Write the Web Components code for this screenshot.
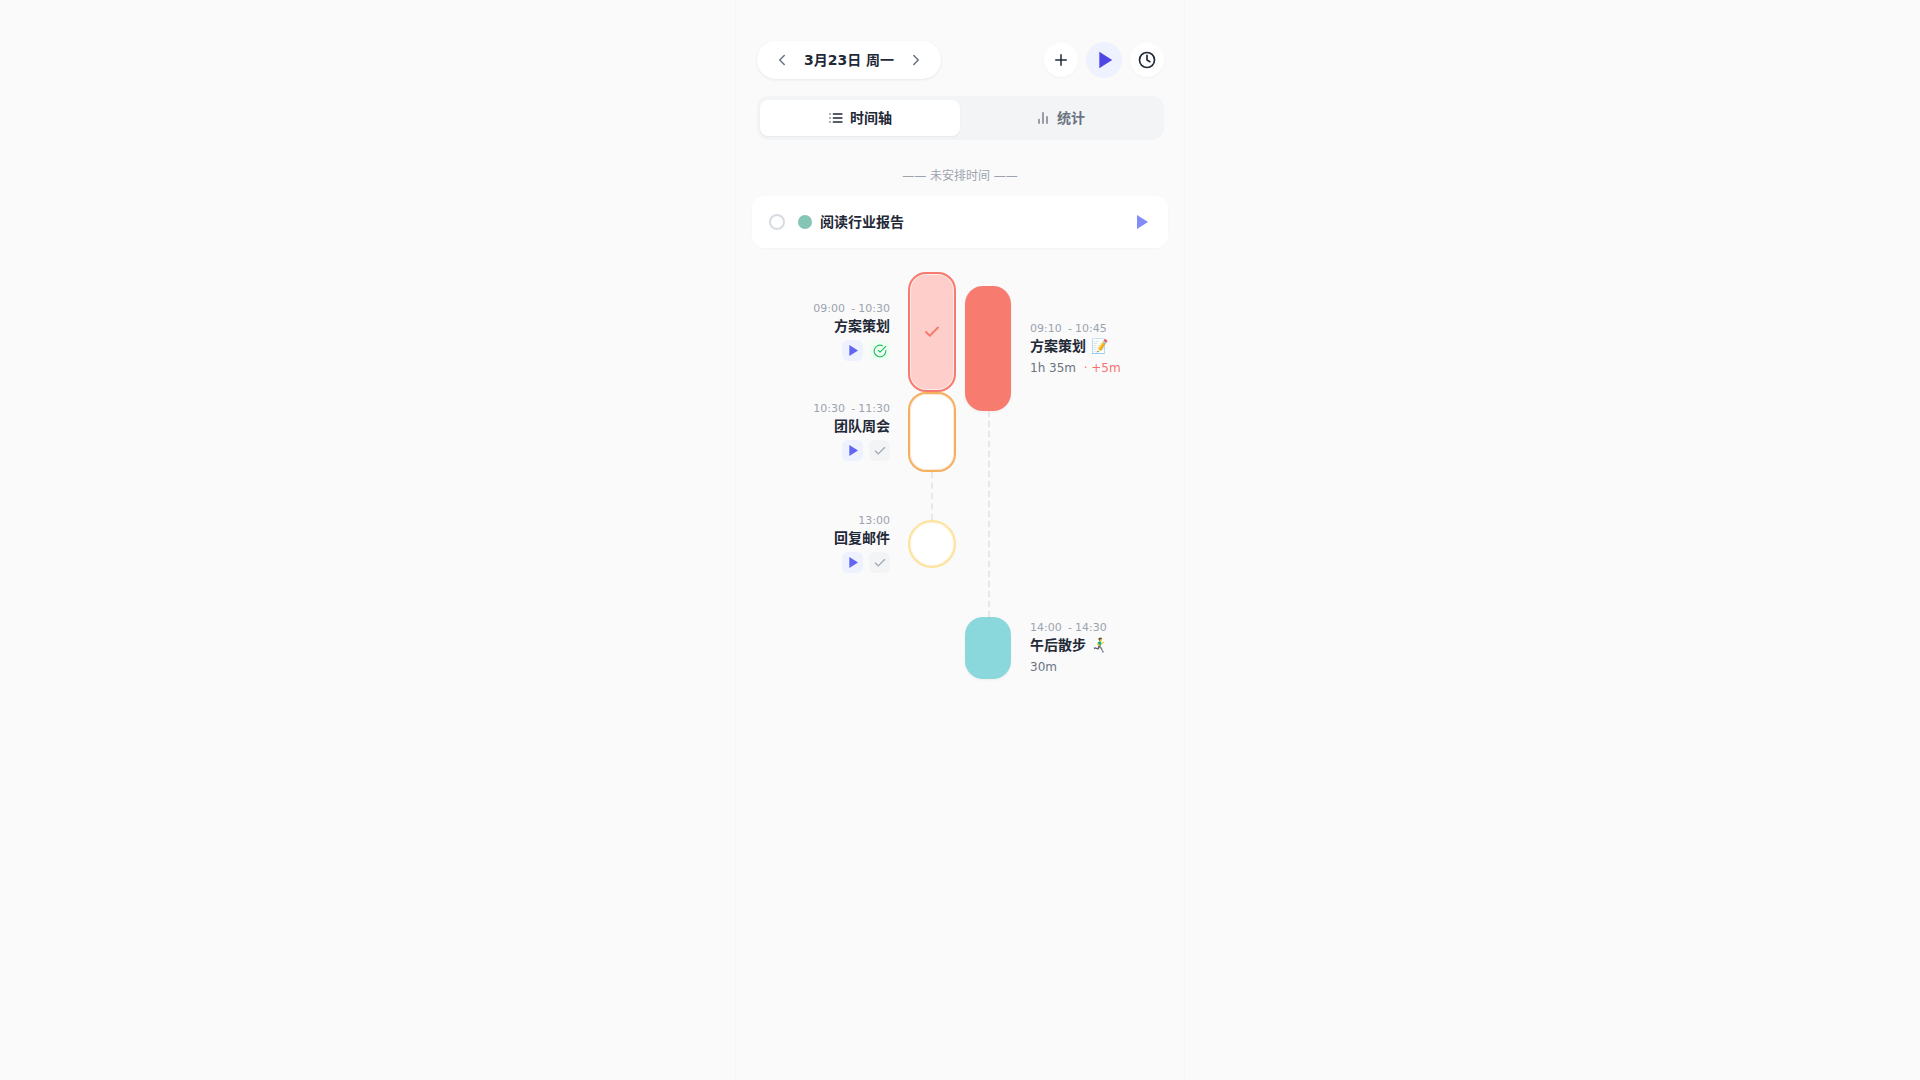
<!DOCTYPE html>
<html lang="zh">
<head>
<meta charset="utf-8">
<title>时间轴</title>
<style>
  html, body { margin: 0; height: 100%; }
  body {
    background: #fafafa;
    font-family: "DejaVu Sans", "Noto Sans CJK SC", sans-serif;
    color: #1f2937;
  }
</style>
</head>
<body>
<day-app>
  <day-header></day-header>
  <day-tabs></day-tabs>
  <section-label>—— 未安排时间 ——</section-label>
  <task-card>阅读行业报告</task-card>
  <day-timeline>
    <plan-block slot="plan" kind="done" height="120" gap="0" time="09:00" end="10:30" state="done">方案策划</plan-block>
    <plan-block slot="plan" kind="orange" height="80" gap="0" time="10:30" end="11:30">团队周会</plan-block>
    <plan-block slot="plan" kind="yellow" height="48" gap="48" time="13:00">回复邮件</plan-block>
    <actual-block slot="actual" color="#f87b6f" height="125" gap="0" time="09:10" end="10:45" emoji="📝" dur="1h 35m" over="+5m">方案策划</actual-block>
    <actual-block slot="actual" color="#8bd8dc" height="62" gap="206" time="14:00" end="14:30" emoji="🏃‍♂️‍➡️" dur="30m">午后散步</actual-block>
  </day-timeline>
</day-app>

<script>
const PLAY = `<svg viewBox="0 0 24 24" width="100%" height="100%"><path d="M8 5v14l11-7z" fill="currentColor"/></svg>`;
const CHECK = `<svg viewBox="0 0 24 24" width="100%" height="100%" fill="none" stroke="currentColor" stroke-width="2" stroke-linecap="round" stroke-linejoin="round"><path d="M20 6L9 17l-5-5"/></svg>`;

class DayApp extends HTMLElement {
  constructor() {
    super();
    this.attachShadow({ mode: 'open' }).innerHTML = `
    <style>
      :host {
        display: block;
        box-sizing: border-box;
        width: 448px;
        min-height: 100vh;
        margin: 0 auto;
        padding: 41px 16px 0;
        background: #fafafa;
        box-shadow: 0 0 0 1px #f6f6f6;
      }
    </style>
    <slot></slot>`;
  }
}

class DayHeader extends HTMLElement {
  constructor() {
    super();
    this.attachShadow({ mode: 'open' }).innerHTML = `
    <style>
      :host { display: flex; align-items: center; justify-content: space-between; margin: 0 4px 0 5px; height: 38px; }
      .pill {
        display: flex; align-items: center; justify-content: space-between;
        box-sizing: border-box; width: 184px; height: 38px; padding: 0 16px;
        background: #fff; border-radius: 19px;
        box-shadow: 0 1px 3px rgba(0,0,0,.08);
        font-size: 14px; font-weight: 700; color: #1f2937;
      }
      .pill span { padding-bottom: 2px; }
      .pill svg { width: 18px; height: 18px; flex: none; color: #6b7280; }
      .actions { display: flex; align-items: center; gap: 8px; }
      .round {
        display: flex; align-items: center; justify-content: center;
        width: 34px; height: 34px; border-radius: 50%; background: #fff;
        box-shadow: 0 1px 2px rgba(0,0,0,.04); color: #1f2937;
      }
      .round svg { width: 20px; height: 20px; }
      .round.plus svg { width: 18px; height: 18px; }
      .round.play { width: 36px; height: 36px; background: #eef2ff; color: #4f46e5; box-shadow: none; }
      .round.play svg { width: 28px; height: 28px; }
    </style>
    <div class="pill">
      <svg viewBox="0 0 24 24" fill="none" stroke="currentColor" stroke-width="2" stroke-linecap="round" stroke-linejoin="round"><path d="M15 18l-6-6 6-6"/></svg>
      <span>3月23日 周一</span>
      <svg viewBox="0 0 24 24" fill="none" stroke="currentColor" stroke-width="2" stroke-linecap="round" stroke-linejoin="round"><path d="M9 18l6-6-6-6"/></svg>
    </div>
    <div class="actions">
      <div class="round plus"><svg viewBox="0 0 24 24" fill="none" stroke="currentColor" stroke-width="2" stroke-linecap="round"><path d="M12 5v14M5 12h14"/></svg></div>
      <div class="round play">${PLAY}</div>
      <div class="round"><svg viewBox="0 0 24 24" fill="none" stroke="currentColor" stroke-width="2" stroke-linecap="round" stroke-linejoin="round"><circle cx="12" cy="12" r="9"/><path d="M12 6.5V12l3.5 2"/></svg></div>
    </div>`;
  }
}

class DayTabs extends HTMLElement {
  constructor() {
    super();
    this.attachShadow({ mode: 'open' }).innerHTML = `
    <style>
      :host {
        display: flex; box-sizing: border-box; height: 44px; margin: 17px 4px 0 5px;
        padding: 4px 4px 4px 3px; background: #f3f4f6; border-radius: 12px;
      }
      .tab {
        flex: 1; display: flex; align-items: center; justify-content: center; gap: 6px;
        font-size: 14px; font-weight: 600; color: #6b7280; border-radius: 8px;
      }
      .tab span { padding-bottom: 2px; }
      .tab.on { background: #fff; color: #1f2937; box-shadow: 0 1px 2px rgba(0,0,0,.05); }
      svg { width: 16px; height: 16px; }
    </style>
    <div class="tab on">
      <svg viewBox="0 0 24 24" fill="none" stroke="currentColor" stroke-width="2" stroke-linecap="round"><path d="M8 6h13M8 12h13M8 18h13M3 6h.01M3 12h.01M3 18h.01"/></svg>
      <span>时间轴</span>
    </div>
    <div class="tab">
      <svg viewBox="0 0 24 24" fill="none" stroke="currentColor" stroke-width="2" stroke-linecap="round"><path d="M18 20V10M12 20V4M6 20v-6"/></svg>
      <span>统计</span>
    </div>`;
  }
}

class SectionLabel extends HTMLElement {
  constructor() {
    super();
    this.attachShadow({ mode: 'open' }).innerHTML = `
    <style>
      :host { display: block; margin-top: 27px; height: 18px; line-height: 18px; text-align: center; font-size: 12px; color: #9ca3af; }
    </style>
    <slot></slot>`;
  }
}

class TaskCard extends HTMLElement {
  constructor() {
    super();
    this.attachShadow({ mode: 'open' }).innerHTML = `
    <style>
      :host {
        display: flex; align-items: center; box-sizing: border-box; height: 52px; margin-top: 11px;
        padding: 0 15px 0 17px; background: #fff; border-radius: 12px;
        box-shadow: 0 1px 2px rgba(0,0,0,.03);
        font-size: 14px; font-weight: 600; color: #1f2937;
      }
      .radio { box-sizing: border-box; width: 16px; height: 16px; border-radius: 50%; border: 2px solid #d9dbe3; }
      .dot { width: 14px; height: 14px; border-radius: 50%; background: #84c5b6; margin: 0 8px 0 13px; }
      .label { flex: 1; padding-bottom: 2px; }
      .play { width: 24px; height: 24px; color: #818cf8; }
    </style>
    <span class="radio"></span><span class="dot"></span>
    <span class="label"><slot></slot></span>
    <span class="play">${PLAY}</span>`;
  }
}

class DayTimeline extends HTMLElement {
  constructor() {
    super();
    this.attachShadow({ mode: 'open' }).innerHTML = `
    <style>
      :host { display: flex; margin-top: 24px; }
      .plan { width: 204px; flex: none; display: flex; flex-direction: column; }
      .actual { margin-left: 9px; padding-top: 14px; display: flex; flex-direction: column; }
    </style>
    <div class="plan"><slot name="plan"></slot></div>
    <div class="actual"><slot name="actual"></slot></div>`;
  }
}

const PLAN_STYLES = {
  done: 'background:#fecfca;border-color:#f87b6f;box-shadow:inset 0 0 0 1px rgba(255,255,255,.6)',
  orange: 'background:#fff;border-color:#f6ae5f;box-shadow:inset 0 0 0 1px rgba(246,174,95,.25)',
  yellow: 'background:#fff;border-color:#fde29b;box-shadow:inset 0 0 0 1px rgba(253,226,155,.4)',
};

class PlanBlock extends HTMLElement {
  constructor() {
    super();
    const h = +this.getAttribute('height');
    const gap = +this.getAttribute('gap');
    const done = this.getAttribute('state') === 'done';
    const end = this.getAttribute('end');
    const radius = h <= 48 ? '50%' : '18px';
    this.attachShadow({ mode: 'open' }).innerHTML = `
    <style>
      :host { display: block; }
      .link { width: 0; height: ${gap}px; margin-left: 179px; border-left: 2px dashed #e5e7eb; ${gap ? '' : 'display:none;'} }
      .row { display: flex; align-items: center; height: ${h}px; }
      .text { width: 138px; margin-right: 18px; flex: none; display: flex; flex-direction: column; align-items: flex-end; }
      .time { font-size: 11px; line-height: 12px; color: #9ca3af; white-space: pre; word-spacing: -.4px; }
      .name { font-size: 14px; font-weight: 600; line-height: 22px; color: #1f2937; }
      .btns { display: flex; gap: 6px; margin-top: 3px; }
      .btn { width: 21px; height: 21px; border-radius: 6px; display: flex; align-items: center; justify-content: center; }
      .btn.play { background: #eef2ff; color: #6366f1; }
      .btn.play svg { width: 19px; height: 19px; }
      .btn.check { background: #f3f4f6; color: #9ca3af; }
      .btn.check svg { width: 14px; height: 14px; }
      .btn.ok { background: #f0fdf4; color: #22c55e; }
      .btn.ok svg { width: 14px; height: 14px; }
      .block {
        box-sizing: border-box; width: 48px; height: ${h}px; border: 2px solid; border-radius: ${radius};
        display: flex; align-items: center; justify-content: center; color: #f87b6f;
        ${PLAN_STYLES[this.getAttribute('kind')]}
      }
      .block svg { width: 18px; height: 18px; stroke-width: 2.6; }
    </style>
    <div class="link"></div>
    <div class="row">
      <div class="text">
        <div class="time">${this.getAttribute('time')}${end ? '  - ' + end : ''}</div>
        <div class="name"><slot></slot></div>
        <div class="btns">
          <span class="btn play">${PLAY}</span>
          ${done
            ? `<span class="btn ok"><svg viewBox="0 0 24 24" fill="none" stroke="currentColor" stroke-width="2" stroke-linecap="round" stroke-linejoin="round"><path d="M22 11.1V12a10 10 0 1 1-5.9-9.1"/><path d="M22 4L12 14l-3-3"/></svg></span>`
            : `<span class="btn check">${CHECK}</span>`}
        </div>
      </div>
      <div class="block">${done ? CHECK : ''}</div>
    </div>`;
  }
}

class ActualBlock extends HTMLElement {
  constructor() {
    super();
    const h = +this.getAttribute('height');
    const gap = +this.getAttribute('gap');
    const end = this.getAttribute('end');
    const over = this.getAttribute('over');
    this.attachShadow({ mode: 'open' }).innerHTML = `
    <style>
      :host { display: block; }
      .link { width: 0; height: ${gap}px; margin-left: 23px; border-left: 2px dashed #e5e7eb; ${gap ? '' : 'display:none;'} }
      .row { display: flex; align-items: center; height: ${h}px; }
      .block {
        width: 46px; height: ${h}px; border-radius: 18px; flex: none; margin-right: 19px;
        background: ${this.getAttribute('color')}; box-shadow: 0 1px 3px rgba(0,0,0,.05);
      }
      .info { padding-top: 1px; }
      .time { font-size: 11px; line-height: 14px; color: #9ca3af; white-space: pre; word-spacing: -.4px; }
      .name { font-size: 14px; font-weight: 600; line-height: 20px; color: #1f2937; white-space: pre; }
      .dur { font-size: 12px; line-height: 18px; margin-top: 3px; color: #6b7280; white-space: pre; }
      .over { color: #f87171; }
    </style>
    <div class="link"></div>
    <div class="row">
      <div class="block"></div>
      <div class="info">
        <div class="time">${this.getAttribute('time')}  - ${end}</div>
        <div class="name"><slot></slot> ${this.getAttribute('emoji')}</div>
        <div class="dur">${this.getAttribute('dur')}${over ? `  <span class="over">· ${over}</span>` : ''}</div>
      </div>
    </div>`;
  }
}

customElements.define('day-app', DayApp);
customElements.define('day-header', DayHeader);
customElements.define('day-tabs', DayTabs);
customElements.define('section-label', SectionLabel);
customElements.define('task-card', TaskCard);
customElements.define('day-timeline', DayTimeline);
customElements.define('plan-block', PlanBlock);
customElements.define('actual-block', ActualBlock);
</script>
</body>
</html>
